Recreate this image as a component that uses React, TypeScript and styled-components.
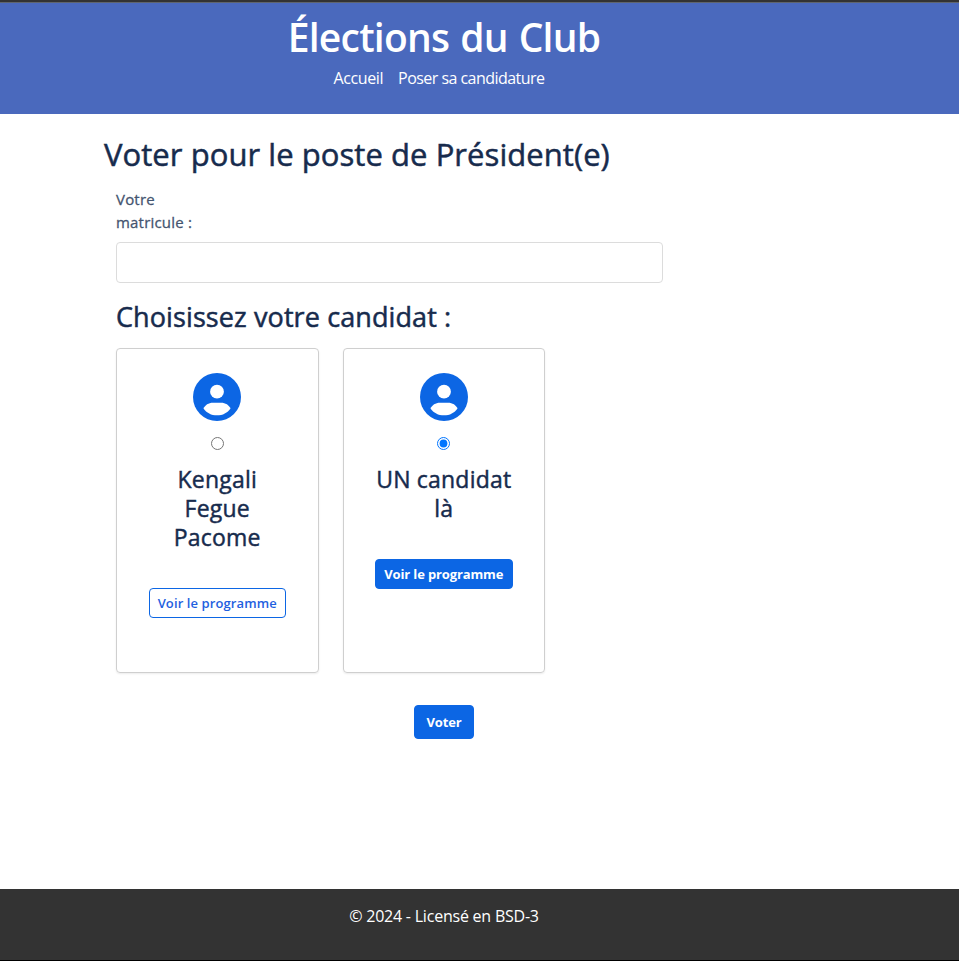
import React, { useState } from "react";
import styled, { createGlobalStyle } from "styled-components";

const GlobalStyle = createGlobalStyle`
  *, *::before, *::after { box-sizing: border-box; }
  html, body { margin: 0; padding: 0; }
  body {
    overflow: hidden;
    background: #fff;
    color: #172b4d;
    font-family: "Segoe UI", "Open Sans", "Noto Sans", sans-serif;
    font-size: 16px;
    line-height: 24px;
  }
  h1, h2, h3, h4, p { margin: 0; }
`;

const Page = styled.div`
  display: flex;
  flex-direction: column;
  height: 961px;
  border-bottom: 1px solid #000;
`;

const Header = styled.header`
  flex: none;
  height: 114px;
  padding: 11px 71px 0 0;
  display: flex;
  flex-direction: column;
  align-items: center;
  border-top: 2px solid #333;
  box-shadow: inset 0 1px 0 #5f656e;
  background: #4a69bd;
  color: #fff;
`;

const SiteTitle = styled.h1`
  font-size: 39px;
  line-height: 48px;
  font-weight: 600;
  letter-spacing: -0.75px;
  word-spacing: 1.5px;
  white-space: nowrap;
`;

const Nav = styled.nav`
  display: flex;
  gap: 15px;
  margin: 5px 10px 0 0;
`;

const NavLink = styled.a<{ $tracking: number }>`
  color: #fff;
  text-decoration: none;
  white-space: nowrap;
  letter-spacing: ${(p) => p.$tracking}px;
`;

const Main = styled.main`
  flex: 1;
  padding: 20px 0 0 104px;
`;

const PageTitle = styled.h2`
  font-size: 31px;
  line-height: 40px;
  font-weight: 400;
  -webkit-text-stroke: 0.5px currentColor;
  letter-spacing: 0.06px;
  white-space: nowrap;
`;

const Form = styled.form`
  width: 656px;
  padding: 14px 0 0 12px;
  display: flex;
  flex-direction: column;
`;

const Label = styled.label`
  width: 85px;
  color: #44546f;
  font-size: 15px;
  line-height: 23px;
  font-weight: 400;
  -webkit-text-stroke: 0.28px currentColor;
  letter-spacing: 0.2px;
`;

const Input = styled.input`
  width: 547px;
  height: 41px;
  margin-top: 8px;
  padding: 0 12px;
  border: 1px solid #dcdcdc;
  border-radius: 4px;
  background: #fff;
  font: inherit;
  outline: none;
`;

const SectionTitle = styled.h3`
  margin-top: 17px;
  font-size: 27px;
  line-height: 34px;
  font-weight: 400;
  -webkit-text-stroke: 0.5px currentColor;
  letter-spacing: 0.1px;
`;

const Candidates = styled.div`
  display: grid;
  grid-template-columns: 202.5px 202.5px;
  gap: 24px;
  margin-top: 14px;
`;

const Card = styled.article`
  height: 325px;
  padding: 24px 31px 0;
  display: flex;
  flex-direction: column;
  align-items: center;
  border: 1px solid #cfcfcf;
  border-radius: 4px;
  box-shadow: 0 1px 2px rgba(0, 0, 0, 0.08);
`;

const Avatar = styled.svg`
  display: block;
  flex: none;
  width: 48px;
  height: 48px;
`;

const Radio = styled.input`
  width: 13px;
  height: 13px;
  margin: 16px 0 0;
  accent-color: #0075ff;
`;

const CandidateName = styled.h4`
  margin-top: 15px;
  text-align: center;
  font-size: 23px;
  line-height: 29px;
  font-weight: 400;
  -webkit-text-stroke: 0.45px currentColor;
  letter-spacing: 0.2px;
`;

const NameLine = styled.span`
  display: block;
  white-space: nowrap;
`;

const Button = styled.button<{ $solid: boolean; $size: "small" | "large" }>`
  flex: none;
  width: ${(p) => (p.$size === "large" ? 60 : p.$solid ? 138 : 137)}px;
  height: ${(p) => (p.$size === "large" ? 34 : 30)}px;
  margin: ${(p) => (p.$size === "large" ? "32px 0 0 298px" : "36px 0 0")};
  padding: 0;
  border: 1px solid #0c66e4;
  border-radius: 4px;
  background: ${(p) => (p.$solid ? "#0c66e4" : "#fff")};
  color: ${(p) => (p.$solid ? "#fff" : "#1f5fe0")};
  font-family: inherit;
  font-size: 13px;
  line-height: 20px;
  font-weight: ${(p) => (p.$solid ? 700 : 600)};
  letter-spacing: ${(p) => (p.$solid ? -0.13 : 0.1)}px;
  white-space: nowrap;
`;

const Footer = styled.footer`
  flex: none;
  height: 71px;
  padding: 15px 71px 0 0;
  background: #333;
  color: #fff;
  text-align: center;
  letter-spacing: -0.22px;
`;

const candidates = [
  { id: "kengali", lines: ["Kengali", "Fegue", "Pacome"] },
  { id: "candidat", lines: ["UN candidat", "là"] },
];

function PersonIcon() {
  return (
    <Avatar viewBox="0 0 48 48" aria-hidden="true">
      <circle cx="24" cy="24" r="24" fill="#0c66e4" />
      <circle cx="24" cy="18.7" r="6.9" fill="#fff" />
      <path
        d="M20 29.700h8c4.500 0 8 2.400 9.500 5.700-3 4.400-7.800 6.900-13.500 6.900s-10.500-2.500-13.500-6.900C12 32.100 15.500 29.700 20 29.700z"
        fill="#fff"
      />
    </Avatar>
  );
}

export default function App() {
  const [selected, setSelected] = useState("candidat");

  return (
    <>
      <GlobalStyle />
      <Page>
        <Header>
          <SiteTitle>Élections du Club</SiteTitle>
          <Nav>
            <NavLink $tracking={-0.4}>Accueil</NavLink>
            <NavLink $tracking={-0.54}>Poser sa candidature</NavLink>
          </Nav>
        </Header>
        <Main>
          <PageTitle>Voter pour le poste de Président(e)</PageTitle>
          <Form onSubmit={(e) => e.preventDefault()}>
            <Label htmlFor="matricule">Votre matricule :</Label>
            <Input id="matricule" type="text" />
            <SectionTitle>Choisissez votre candidat :</SectionTitle>
            <Candidates>
              {candidates.map((c) => (
                <Card key={c.id}>
                  <PersonIcon />
                  <Radio
                    type="radio"
                    name="candidate"
                    checked={selected === c.id}
                    onChange={() => setSelected(c.id)}
                  />
                  <CandidateName>
                    {c.lines.map((line) => (
                      <NameLine key={line}>{line}</NameLine>
                    ))}
                  </CandidateName>
                  <Button type="button" $size="small" $solid={selected === c.id}>
                    Voir le programme
                  </Button>
                </Card>
              ))}
            </Candidates>
            <Button type="submit" $size="large" $solid>
              Voter
            </Button>
          </Form>
        </Main>
        <Footer>© 2024 - Licensé en BSD-3</Footer>
      </Page>
    </>
  );
}
